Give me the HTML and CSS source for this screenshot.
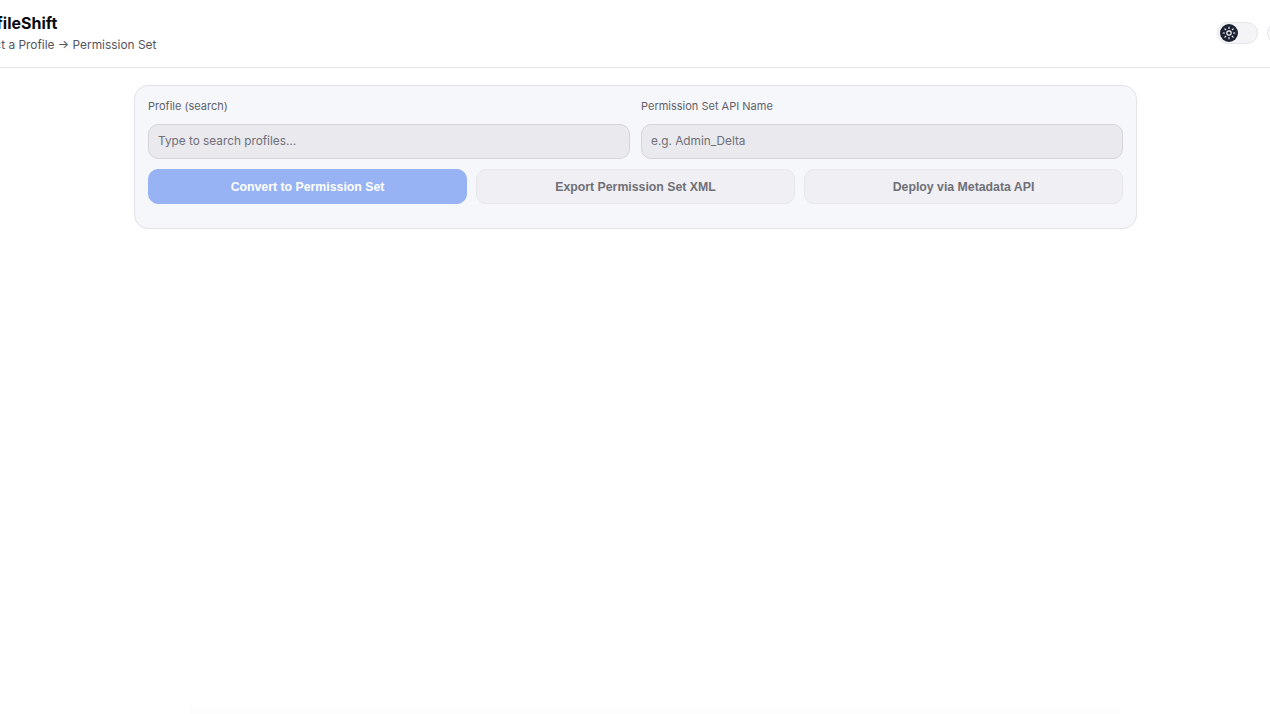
FILE: index.html
```html
<!DOCTYPE html>
<html lang="en">
<head>
<meta charset="utf-8">
<title>ProfileShift</title>
<link rel="stylesheet" href="styles.css">
</head>
<body>
<div class="page">
  <header class="topbar">
    <div class="brand">
      <div class="brand-name">ProfileShift</div>
      <div class="brand-sub">Select a Profile → Permission Set</div>
    </div>
    <div class="actions">
      <div class="toggle">
        <span class="knob">
          <svg viewBox="0 0 16 16" width="14" height="14" fill="none" stroke="#fff" stroke-width="1.3" stroke-linecap="round">
            <circle cx="8" cy="8" r="2.5"/>
            <path d="M8 1.3v1.5M8 13.2v1.5M1.3 8h1.5M13.2 8h1.5M3.3 3.3l1 1M11.7 11.7l1 1M3.3 12.7l1-1M11.7 4.3l1-1"/>
          </svg>
        </span>
      </div>
      <div class="chip"></div>
    </div>
  </header>
  <main class="main">
    <section class="card">
      <div class="fields">
        <div class="field">
          <label class="label" for="profile">Profile (search)</label>
          <input class="input" id="profile" type="text" placeholder="Type to search profiles…">
        </div>
        <div class="field">
          <label class="label" for="psname">Permission Set API Name</label>
          <input class="input" id="psname" type="text" placeholder="e.g. Admin_Delta">
        </div>
      </div>
      <div class="buttons">
        <button class="btn btn-primary" type="button">Convert to Permission Set</button>
        <button class="btn" type="button">Export Permission Set XML</button>
        <button class="btn" type="button">Deploy via Metadata API</button>
      </div>
    </section>
  </main>
  <div class="fade"></div>
</div>
</body>
</html>
```
FILE: styles.css
```css
* { box-sizing: border-box; }
html, body { margin: 0; height: 100%; overflow: hidden; }
body {
  background: #fff;
  color: #111;
  font-family: Inter, "Liberation Sans", sans-serif;
}
.page {
  width: 1270px;
  height: 714px;
  overflow: hidden;
  display: flex;
  flex-direction: column;
}
.topbar {
  height: 68px;
  flex: none;
  width: 1270px;
  border-bottom: 1px solid #e5e5ea;
  display: flex;
  justify-content: space-between;
  align-items: flex-start;
}
.brand { margin-left: -30px; padding-top: 14px; }
.brand-name { font-size: 16px; line-height: 19px; font-weight: 700; color: #0b0b0f; }
.brand-sub { margin-top: 2px; font-size: 11.9px; line-height: 20px; color: #55555f; white-space: nowrap; }
.actions { display: flex; gap: 9px; padding-top: 22px; margin-right: -31px; }
.toggle {
  width: 41px; height: 22px;
  border: 1px solid #e6e6ea;
  border-radius: 11px;
  background: #f4f4f6;
  padding: 1px 2px;
  display: flex; align-items: center;
}
.knob {
  width: 18px; height: 18px;
  border-radius: 50%;
  background: #1c2233;
  display: flex; align-items: center; justify-content: center;
}
.chip { width: 34px; height: 22px; border: 1px solid #e6e6ea; border-radius: 11px; background: #f8f8fa; }
.main { padding: 17px 133px 0 134px; flex: 1; }
.card {
  height: 144px;
  border: 1px solid #e2e2e8;
  border-radius: 14px;
  background: #f6f7fb;
  padding: 12px 13px 0;
}
.fields { display: grid; grid-template-columns: 1fr 1fr; gap: 11px; }
.field { display: flex; flex-direction: column; }
.label { font-size: 11px; line-height: 16px; color: #5f5f68; }
.input {
  margin-top: 9.5px;
  height: 35px;
  width: 100%;
  border: 1px solid #d4d4da;
  border-radius: 10px;
  background: #e9e9ee;
  padding: 0 9px;
  font-family: Inter, "Liberation Sans", sans-serif;
  font-size: 11.8px;
  color: #111;
  outline: none;
}
.input::placeholder { color: #6f6f78; opacity: 1; }
.buttons { margin-top: 10.5px; display: grid; grid-template-columns: repeat(3, 1fr); gap: 9px; }
.btn {
  height: 35px;
  border: 1px solid #e6e6eb;
  border-radius: 10px;
  background: #f0f0f4;
  color: #6f6f76;
  font-family: "Liberation Sans", Arial, sans-serif;
  font-size: 12.3px;
  font-weight: 700;
  padding: 0;
}
.btn-primary { background: #97b3f3; border-color: #97b3f3; color: #fff; }
.fade { flex: none; height: 8px; margin: 0 150px 0 190px; background: #fdfdfd; }
```
